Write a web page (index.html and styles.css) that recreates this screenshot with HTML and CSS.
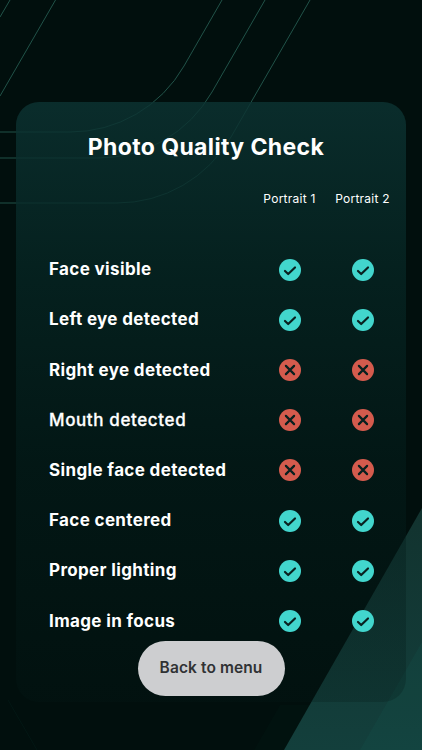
FILE: index.html
```html
<!DOCTYPE html>
<html lang="en">
	<head>
		<meta charset="utf-8" />
		<meta name="viewport" content="width=device-width, initial-scale=1" />
		<title>Photo Quality Check</title>
		<link rel="stylesheet" href="styles.css">
	</head>
	<body>
		<svg class="backdrop" viewBox="0 0 422 750" aria-hidden="true">
			<defs>
				<linearGradient id="wedge" x1="0" y1="508" x2="0" y2="750" gradientUnits="userSpaceOnUse">
					<stop offset="0" stop-color="#12332f" />
					<stop offset="1" stop-color="#133f3c" />
				</linearGradient>
			</defs>
			<g class="lines">
				<path d="M10 0L0 17" />
				<path d="M55.500 0L0 96" />
				<path d="M222 0L184 66A131 131 0 0 1 70 132H0" />
				<path d="M265 0L212 92A131 131 0 0 1 98 158H0" />
				<path d="M310 0L231 137A131 131 0 0 1 117 203H0" />
				<path class="faint" d="M8 700L37 750" />
			</g>
			<path fill="#01120f" d="M280 705H310L284 750H254Z" />
			<path fill="url(#wedge)" d="M284 750L422 508V750Z" />
			<path fill="#15534c" fill-opacity=".25" d="M360 750L422 642V750Z" />
		</svg>

		<svg class="sprite">
			<symbol id="pass" viewBox="0 0 22 22">
				<circle cx="11" cy="11" r="11" fill="#42d6cd" />
				<path d="M6 12L9.200 15L16 8.500" />
			</symbol>
			<symbol id="fail" viewBox="0 0 22 22">
				<circle cx="11" cy="11" r="11" fill="#d45b4d" />
				<path d="M6.900 6.900L15.100 15.100M15.100 6.900L6.900 15.100" />
			</symbol>
		</svg>

		<main class="card">
			<h1>Photo Quality Check</h1>

			<div class="row heads">
				<span></span>
				<span>Portrait 1</span>
				<span>Portrait 2</span>
			</div>

			<section class="checks">
				<div class="row">
					<span class="label">Face visible</span>
					<svg class="icon"><use href="#pass" /></svg>
					<svg class="icon"><use href="#pass" /></svg>
				</div>
				<div class="row">
					<span class="label">Left eye detected</span>
					<svg class="icon"><use href="#pass" /></svg>
					<svg class="icon"><use href="#pass" /></svg>
				</div>
				<div class="row">
					<span class="label">Right eye detected</span>
					<svg class="icon"><use href="#fail" /></svg>
					<svg class="icon"><use href="#fail" /></svg>
				</div>
				<div class="row">
					<span class="label light">Mouth detected</span>
					<svg class="icon"><use href="#fail" /></svg>
					<svg class="icon"><use href="#fail" /></svg>
				</div>
				<div class="row">
					<span class="label">Single face detected</span>
					<svg class="icon"><use href="#fail" /></svg>
					<svg class="icon"><use href="#fail" /></svg>
				</div>
				<div class="row">
					<span class="label">Face centered</span>
					<svg class="icon"><use href="#pass" /></svg>
					<svg class="icon"><use href="#pass" /></svg>
				</div>
				<div class="row">
					<span class="label">Proper lighting</span>
					<svg class="icon"><use href="#pass" /></svg>
					<svg class="icon"><use href="#pass" /></svg>
				</div>
				<div class="row">
					<span class="label">Image in focus</span>
					<svg class="icon"><use href="#pass" /></svg>
					<svg class="icon"><use href="#pass" /></svg>
				</div>
			</section>

			<button class="back">Back to menu</button>
		</main>
	</body>
</html>
```
FILE: styles.css
```css
* {
	margin: 0;
	box-sizing: border-box;
}
body {
	background: #010f0d;
	color: #fff;
	font-family: Inter, "Liberation Sans", sans-serif;
	height: 750px;
	overflow: hidden;
	padding: 102px 16px 0;
}
.backdrop {
	height: 750px;
	left: 0;
	position: absolute;
	top: 0;
	width: 422px;
	z-index: -1;
}
.sprite {
	display: none;
}
.lines {
	fill: none;
	stroke: #215349;
	stroke-width: 1;
}
.lines .faint {
	stroke: #031714;
}
.card {
	align-items: center;
	background: linear-gradient(
		rgba(12, 51, 50, 0.82),
		rgba(6, 37, 35, 0.8) 28%,
		rgba(4, 31, 29, 0.5) 60%,
		rgba(4, 25, 23, 0.25)
	);
	border-radius: 23px;
	display: flex;
	flex-direction: column;
	height: 600px;
	padding-top: 29px;
	width: 390px;
}
h1 {
	font-size: 23px;
	font-weight: 700;
	letter-spacing: 0.38px;
	line-height: 32px;
	margin-right: 10px;
	white-space: nowrap;
}
.row {
	align-items: center;
	display: grid;
	grid-template-columns: 204px 73px 73px;
	height: 50.2px;
	justify-items: center;
	padding-left: 33px;
	width: 100%;
}
.heads {
	font-size: 12px;
	height: 20px;
	letter-spacing: 0.25px;
	margin: 25px 0 36.6px;
	white-space: nowrap;
}
.label {
	font-size: 17px;
	font-weight: 700;
	justify-self: start;
	letter-spacing: 0.36px;
	line-height: 24px;
	padding-bottom: 1px;
	white-space: nowrap;
}
.light {
	font-weight: 500;
	letter-spacing: 0.62px;
	-webkit-text-stroke: 0.3px #fff;
}
.checks {
	width: 100%;
}
.icon {
	fill: none;
	height: 22px;
	stroke: #09201f;
	stroke-linecap: round;
	stroke-linejoin: round;
	stroke-width: 2.2;
	width: 22px;
}
#pass circle,
#fail circle {
	stroke: none;
}
.back {
	background: #cdced0;
	border: none;
	border-radius: 28px;
	color: #303234;
	cursor: pointer;
	flex: none;
	font: 600 15.5px Inter, "Liberation Sans", sans-serif;
	height: 55px;
	letter-spacing: 0.1px;
	margin-top: -5px;
	padding-bottom: 3px;
	width: 147px;
}
```
